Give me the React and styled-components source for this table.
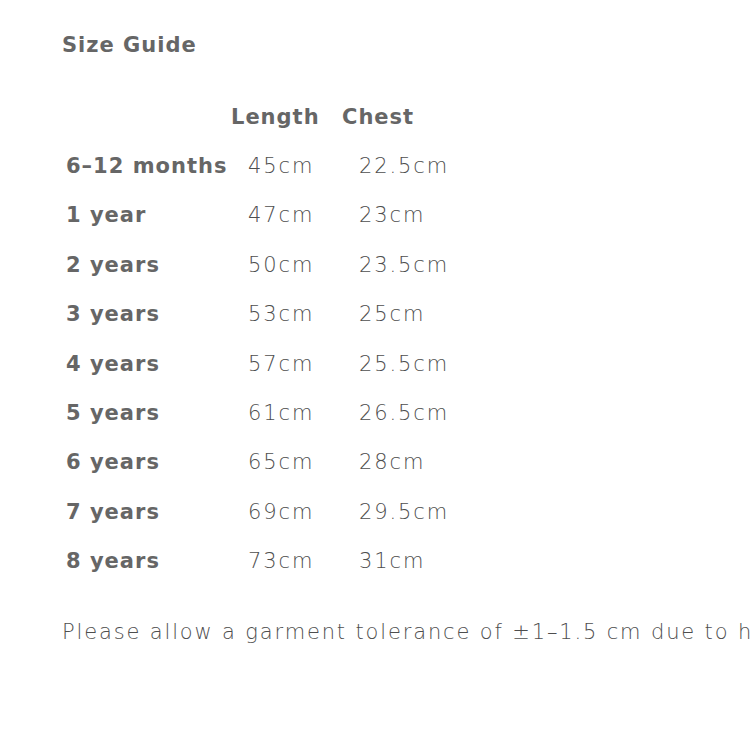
import React from 'react';
import styled, { createGlobalStyle } from 'styled-components';

const sizes = [
    { label: '6–12 months', length: '45cm', chest: '22.5cm' },
    { label: '1 year', length: '47cm', chest: '23cm' },
    { label: '2 years', length: '50cm', chest: '23.5cm' },
    { label: '3 years', length: '53cm', chest: '25cm' },
    { label: '4 years', length: '57cm', chest: '25.5cm' },
    { label: '5 years', length: '61cm', chest: '26.5cm' },
    { label: '6 years', length: '65cm', chest: '28cm' },
    { label: '7 years', length: '69cm', chest: '29.5cm' },
    { label: '8 years', length: '73cm', chest: '31cm' },
];

const GlobalStyle = createGlobalStyle`
    body {
        margin: 0;
        background: #ffffff;
        font-family: 'DejaVu Sans', Inter, sans-serif;
        overflow: hidden;
    }
`;

export default function App() {
    return (
        <>
            <GlobalStyle />
            <Page>
                <Title>Size Guide</Title>
                <Table>
                    <Cell />
                    <Cell head>Length</Cell>
                    <Cell head>Chest</Cell>
                    {sizes.map((item, index) => (
                        <React.Fragment key={`${item.label}_${index}`}>
                            <Cell bold>{item.label}</Cell>
                            <Cell>{item.length}</Cell>
                            <Cell>{item.chest}</Cell>
                        </React.Fragment>
                    ))}
                </Table>
                <Note>Please allow a garment tolerance of ±1–1.5 cm due to hand finishing.</Note>
            </Page>
        </>
    );
}

const Page = styled.div`
    padding: 31px 0 0 62px;
    width: 750px;
    box-sizing: border-box;
`;

const Title = styled.h2`
    margin: 0;
    color: #666666;
    font-size: 21px;
    font-weight: 700;
    line-height: 28px;
    letter-spacing: 1px;
`;

const Table = styled.div`
    display: grid;
    grid-template-columns: 165px 111px auto;
    grid-auto-rows: 49.4px;
    margin: 33px 0 0 4px;
    align-items: center;
`;

const Cell = styled.div`
    color: ${(props) => (props.head || props.bold ? '#666666' : '#4e4e4e')};
    font-size: 21px;
    line-height: 28px;
    white-space: nowrap;
    font-weight: ${(props) => (props.head || props.bold ? 700 : 300)};
    letter-spacing: ${(props) => (props.head || props.bold ? '1px' : '1.9px')};
    padding-left: ${(props) => (props.head || props.bold ? '0' : '17px')};
`;

const Note = styled.p`
    margin: 32px 0 0;
    color: #4e4e4e;
    font-size: 21px;
    font-weight: 300;
    line-height: 28px;
    letter-spacing: 1.85px;
    white-space: nowrap;
`;
